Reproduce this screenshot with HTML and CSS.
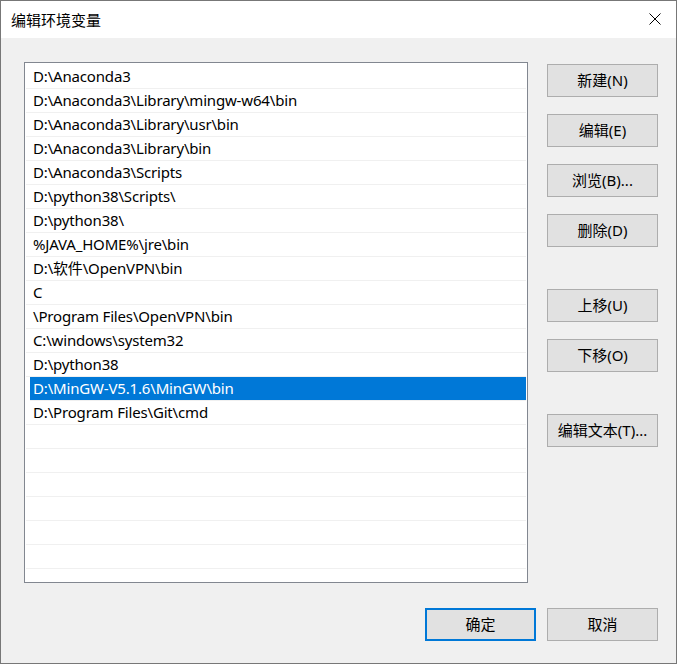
FILE: index.html
```html
<!DOCTYPE html>
<html lang="zh-CN">
<head>
<meta charset="utf-8">
<title>编辑环境变量</title>
<link rel="stylesheet" href="styles.css">
</head>
<body>
<div class="window">
  <div class="titlebar">
    <span class="title">编辑环境变量</span>
    <span class="close">
      <svg width="12" height="12" viewBox="0 0 12 12"><path d="M0.5 0.5 L11.5 11.5 M11.5 0.5 L0.5 11.5" stroke="#000" stroke-width="1" fill="none"/></svg>
    </span>
  </div>
  <div class="content">
    <div class="main">
      <div class="list">
        <div class="row">D:\Anaconda3</div>
        <div class="row">D:\Anaconda3\Library\mingw-w64\bin</div>
        <div class="row">D:\Anaconda3\Library\usr\bin</div>
        <div class="row">D:\Anaconda3\Library\bin</div>
        <div class="row">D:\Anaconda3\Scripts</div>
        <div class="row">D:\python38\Scripts\</div>
        <div class="row">D:\python38\</div>
        <div class="row">%JAVA_HOME%\jre\bin</div>
        <div class="row">D:\软件\OpenVPN\bin</div>
        <div class="row">C</div>
        <div class="row">\Program Files\OpenVPN\bin</div>
        <div class="row">C:\windows\system32</div>
        <div class="row">D:\python38</div>
        <div class="row selected">D:\MinGW-V5.1.6\MinGW\bin</div>
        <div class="row">D:\Program Files\Git\cmd</div>
        <div class="row"></div>
        <div class="row"></div>
        <div class="row"></div>
        <div class="row"></div>
        <div class="row"></div>
        <div class="row"></div>
      </div>
      <div class="side">
        <button class="btn">新建(N)</button>
        <button class="btn">编辑(E)</button>
        <button class="btn">浏览(B)...</button>
        <button class="btn">删除(D)</button>
        <button class="btn group">上移(U)</button>
        <button class="btn">下移(O)</button>
        <button class="btn group">编辑文本(T)...</button>
      </div>
    </div>
    <div class="footer">
      <button class="btn primary">确定</button>
      <button class="btn">取消</button>
    </div>
  </div>
</div>
</body>
</html>
```

FILE: styles.css
```css
* { box-sizing: border-box; }
html, body { margin: 0; padding: 0; }
body {
  font-family: "Noto Sans", "Noto Sans CJK SC", sans-serif;
  background: #f0f0f0;
}
.window {
  width: 677px;
  height: 664px;
  border: 1px solid #777777;
  background: #f0f0f0;
  display: flex;
  flex-direction: column;
}
.titlebar {
  height: 37px;
  background: #ffffff;
  display: flex;
  align-items: center;
  justify-content: space-between;
  padding: 0 15px 0 10px;
  flex: none;
}
.title {
  font-family: "Noto Sans CJK SC", sans-serif;
  font-size: 15px;
  color: #000;
  line-height: 20px;
}
.close {
  display: flex;
  width: 12px;
  height: 12px;
  margin-top: -1px;
}
.content {
  flex: 1;
  padding: 24px 18px 0 23px;
  display: flex;
  flex-direction: column;
}
.main {
  display: flex;
  gap: 19px;
}
.list {
  width: 504px;
  height: 521px;
  border: 1px solid #828790;
  background: #ffffff;
  padding: 2px 1px 0 1px;
  overflow: hidden;
}
.row {
  height: 24px;
  line-height: 23px;
  border-bottom: 1px solid #f0f0f0;
  padding-left: 7px;
  font-size: 15px;
  letter-spacing: -0.17px;
  color: #000;
  white-space: nowrap;
}
.row.selected {
  background: #0078d7;
  color: #ffffff;
  background-clip: content-box;
  padding-left: 0;
  margin-left: 4px;
  text-indent: 3px;
}
.side {
  display: flex;
  flex-direction: column;
  gap: 17px;
  padding-top: 2px;
}
.side .group { margin-top: 25px; }
.btn {
  width: 111px;
  height: 33px;
  border: 1px solid #adadad;
  background: #e1e1e1;
  font-family: "Noto Sans", "Noto Sans CJK SC", sans-serif;
  font-size: 15px;
  color: #000;
  padding: 0 0 3px 0;
  margin: 0;
}
.footer {
  display: flex;
  justify-content: flex-end;
  gap: 11px;
  margin-top: 25px;
}
.btn.primary {
  border: 2px solid #0078d7;
}
```
